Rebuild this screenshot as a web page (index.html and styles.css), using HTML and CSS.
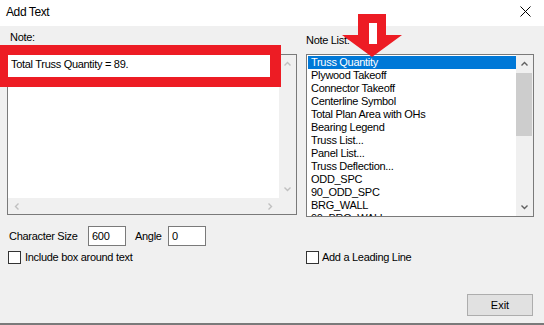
FILE: index.html
```html
<!DOCTYPE html>
<html lang="en">
<head>
    <meta charset="UTF-8">
    <title>Add Text</title>
    <link rel="stylesheet" href="styles.css">
</head>
<body>
    <div class="window">
        <div class="titlebar">
            <span class="title">Add Text</span>
            <svg class="close" width="11" height="11" viewBox="0 0 11 11">
                <path d="M0.5 0.5 L10.5 10.5 M10.5 0.5 L0.5 10.5" stroke="#000" stroke-width="1" fill="none"/>
            </svg>
        </div>

        <div class="client">
            <div class="label note-label">Note:</div>
            <div class="label list-label">Note List:</div>

            <div class="textbox">
                <div class="tb-text">Total Truss Quantity = 89.</div>
                <div class="vscroll off">
                    <div class="sb-btn"><svg width="7" height="5" viewBox="0 0 7 5"><path d="M0.5 4.5 L3.5 1.5 L6.5 4.5" fill="none" stroke="currentColor" stroke-width="1.4"/></svg></div>
                    <div class="track"></div>
                    <div class="sb-btn"><svg width="7" height="5" viewBox="0 0 7 5"><path d="M0.5 0.5 L3.5 3.5 L6.5 0.5" fill="none" stroke="currentColor" stroke-width="1.4"/></svg></div>
                </div>
                <div class="hscroll off">
                    <div class="sb-btn"><svg width="5" height="7" viewBox="0 0 5 7"><path d="M4.5 0.5 L1.5 3.5 L4.5 6.5" fill="none" stroke="currentColor" stroke-width="1.4"/></svg></div>
                    <div class="track"></div>
                    <div class="sb-btn"><svg width="5" height="7" viewBox="0 0 5 7"><path d="M0.5 0.5 L3.5 3.5 L0.5 6.5" fill="none" stroke="currentColor" stroke-width="1.4"/></svg></div>
                </div>
                <div class="corner"></div>
            </div>

            <div class="listbox">
                <ul class="items">
                    <li class="selected">Truss Quantity</li>
                    <li>Plywood Takeoff</li>
                    <li>Connector Takeoff</li>
                    <li>Centerline Symbol</li>
                    <li>Total Plan Area with OHs</li>
                    <li>Bearing Legend</li>
                    <li>Truss List...</li>
                    <li>Panel List...</li>
                    <li>Truss Deflection...</li>
                    <li>ODD_SPC</li>
                    <li>90_ODD_SPC</li>
                    <li>BRG_WALL</li>
                    <li>90_BRG_WALL</li>
                </ul>
                <div class="vscroll">
                    <div class="sb-btn"><svg width="7" height="5" viewBox="0 0 7 5"><path d="M0.5 4.5 L3.5 1.5 L6.5 4.5" fill="none" stroke="currentColor" stroke-width="1.4"/></svg></div>
                    <div class="track"><div class="thumb"></div></div>
                    <div class="sb-btn"><svg width="7" height="5" viewBox="0 0 7 5"><path d="M0.5 0.5 L3.5 3.5 L6.5 0.5" fill="none" stroke="currentColor" stroke-width="1.4"/></svg></div>
                </div>
            </div>

            <div class="fields">
                <span class="field-label size-label">Character Size</span>
                <span class="field-box">600</span>
                <span class="field-label angle-label">Angle</span>
                <span class="field-box">0</span>
            </div>

            <label class="check left-check"><span class="box"></span>Include box around text</label>
            <label class="check right-check"><span class="box"></span>Add a Leading Line</label>
        </div>

        <div class="footer">
            <button class="btn">Exit</button>
        </div>

        <!-- red markup drawn over the dialog -->
        <div class="callout"></div>
        <svg class="pointer" width="61" height="44" viewBox="0 0 61 44">
            <path d="M16 0 H44 V21 H60 L30 43 L0 21 H16 Z" fill="#ed1c24"/>
            <rect x="27" y="9" width="8" height="21" fill="#fff"/>
        </svg>
    </div>
</body>
</html>
```

FILE: styles.css
```css
body {
    margin: 0;
    font-family: "Liberation Sans", Arial, sans-serif;
    font-size: 11px;
    line-height: 13px;
    letter-spacing: -0.3px;
    color: #000;
    background: #f0f0f0;
}
.window {
    position: relative;
    width: 544px;
    height: 325px;
    box-sizing: border-box;
    border-bottom: 2px solid #7a7a7a;
    background: #f0f0f0;
    display: flex;
    flex-direction: column;
    overflow: hidden;
}
.titlebar {
    height: 26px;
    background: #fff;
    display: flex;
    align-items: center;
    justify-content: space-between;
    padding: 0 13px 0 6px;
    font-size: 12px;
    letter-spacing: -0.4px;
}
.title {
    margin-top: -2px;
}
.close {
    margin-top: -3px;
}
.client {
    display: grid;
    grid-template-columns: 290px 228px;
    column-gap: 9px;
    padding-left: 7px;
    align-items: start;
}
.label {
    height: 28px;
    box-sizing: border-box;
}
.note-label {
    padding: 5px 0 0 3px;
}
.list-label {
    padding-top: 8px;
}
.textbox {
    height: 161px;
    box-sizing: border-box;
    border: 1px solid #7a7a7a;
    background: #fff;
    display: grid;
    grid-template-columns: 1fr 17px;
    grid-template-rows: 1fr 16px;
}
.tb-text {
    padding: 3px 3px 0;
    white-space: nowrap;
}
.vscroll {
    display: flex;
    flex-direction: column;
    background: #f0f0f0;
    color: #606060;
}
.hscroll {
    display: flex;
    background: #f0f0f0;
}
.off {
    color: #c0c0c0;
}
.corner {
    background: #f0f0f0;
}
.sb-btn {
    flex: none;
    width: 17px;
    height: 17px;
    display: flex;
    align-items: center;
    justify-content: center;
}
.hscroll .sb-btn {
    height: 16px;
}
.sb-btn svg {
    display: block;
}
.track {
    flex: 1;
    padding-top: 1px;
}
.thumb {
    height: 63px;
    margin-right: 1px;
    background: #cdcdcd;
}
.listbox {
    height: 163px;
    box-sizing: border-box;
    border: 1px solid #7a7a7a;
    background: #fff;
    display: grid;
    grid-template-columns: 1fr 17px;
}
.items {
    list-style: none;
    margin: 0;
    padding: 1px 0 0 1px;
    overflow: hidden;
}
.items li {
    height: 13px;
    padding-left: 3px;
    white-space: nowrap;
}
.items li.selected {
    background: #0078d7;
    color: #fff;
}
.fields {
    grid-column: 1;
    display: flex;
    align-items: center;
    height: 20px;
    margin-top: 9px;
    padding-left: 2px;
}
.size-label {
    width: 79px;
}
.angle-label {
    width: 33px;
    margin-left: 9px;
}
.field-box {
    width: 38px;
    height: 20px;
    box-sizing: border-box;
    border: 1px solid #7a7a7a;
    background: #fff;
    padding-left: 3px;
    line-height: 18px;
}
.check {
    display: flex;
    align-items: center;
    height: 14px;
    margin-top: 4px;
}
.left-check {
    grid-column: 1;
    grid-row: 4;
}
.right-check {
    grid-column: 2;
    grid-row: 4;
}
.box {
    width: 13px;
    height: 13px;
    box-sizing: border-box;
    border: 1px solid #333;
    background: #fff;
    margin-right: 4px;
}
.left-check .box {
    margin-left: 1px;
}
.right-check .box {
    margin-right: 3px;
}
.footer {
    margin-top: auto;
    display: flex;
    justify-content: flex-end;
    padding: 0 11px 7px 0;
}
.btn {
    width: 66px;
    height: 22px;
    padding: 0;
    border: 1px solid #adadad;
    background: #e1e1e1;
    font: inherit;
    color: #000;
}
.callout {
    position: absolute;
    left: 0;
    top: 45px;
    width: 281px;
    height: 42px;
    box-sizing: border-box;
    border-style: solid;
    border-color: #ed1c24;
    border-width: 10px 11px 10px 8px;
}
.pointer {
    position: absolute;
    left: 342px;
    top: 14px;
}
```
